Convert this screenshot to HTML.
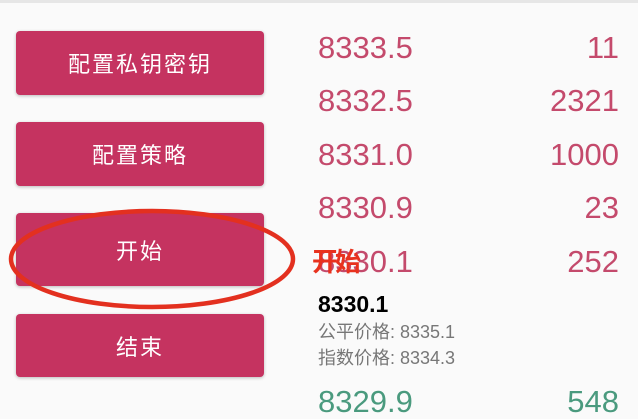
<html><head><style>
body{margin:0;width:638px;height:402px;overflow:hidden;background:#fafafa;font-family:"Liberation Sans","Noto Sans CJK SC",sans-serif;position:relative}
.top{position:absolute;left:0;top:0;width:638px;height:3px;background:#e6e6e6}
.btn{position:absolute;left:16px;width:248px;background:#c53360;color:#fff;border-radius:4px;font-size:22px;letter-spacing:2px;display:flex;align-items:center;justify-content:center;box-shadow:0 1px 3px rgba(0,0,0,.25)}
.n{position:absolute;left:318px;font-size:31px;color:#c44a6c;line-height:32px}
.v{position:absolute;right:19px;font-size:31px;color:#c44a6c;line-height:32px;text-align:right}
.g{position:absolute;left:318px;font-size:18px;color:#777;line-height:20px}
</style></head><body>
<div class="top"></div>
<div class="btn" style="top:31px;height:64px">配置私钥密钥</div>
<div class="btn" style="top:122px;height:64px">配置策略</div>
<div class="btn" style="top:213px;height:73px">开始</div>
<div class="btn" style="top:314px;height:63px">结束</div>
<div class="n" style="top:32px">8333.5</div><div class="v" style="top:32px">11</div>
<div class="n" style="top:85px">8332.5</div><div class="v" style="top:85px">2321</div>
<div class="n" style="top:139px">8331.0</div><div class="v" style="top:139px">1000</div>
<div class="n" style="top:192px">8330.9</div><div class="v" style="top:192px">23</div>
<div class="n" style="top:246px">8330.1</div><div class="v" style="top:246px">252</div>
<div style="position:absolute;left:312px;top:247px;font-size:26px;font-weight:bold;color:#e8321e;line-height:30px;letter-spacing:-3px">开始</div>
<div style="position:absolute;left:318px;top:291px;font-size:23px;font-weight:bold;color:#000;line-height:26px">8330.1</div>
<div class="g" style="top:322px">公平价格: 8335.1</div>
<div class="g" style="top:348px">指数价格: 8334.3</div>
<div class="n" style="top:386px;color:#4a9a7e">8329.9</div><div class="v" style="top:386px;color:#4a9a7e">548</div>
<svg style="position:absolute;left:0;top:0" width="638" height="402"><ellipse cx="152" cy="259" rx="141" ry="48" fill="none" stroke="#e3301f" stroke-width="4.5"/></svg>
</body></html>
